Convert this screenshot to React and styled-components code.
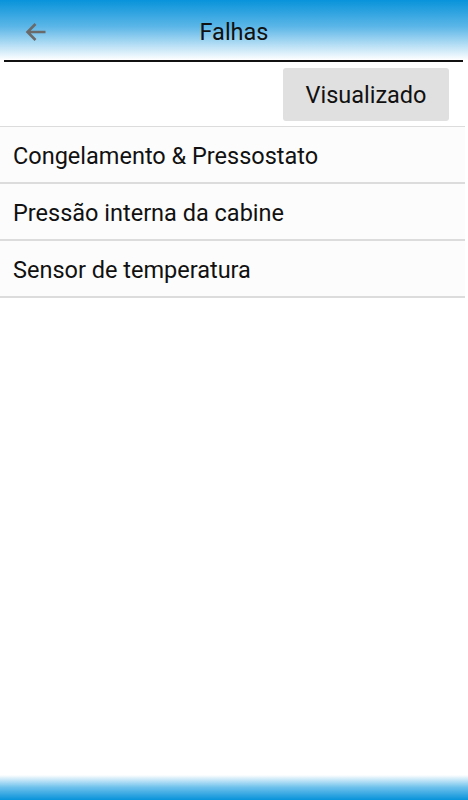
import styled, { createGlobalStyle } from "styled-components"

const GlobalStyle = createGlobalStyle`
    html, body {
        margin: 0;
        padding: 0;
        background: #ffffff;
        font-family: Roboto, "Noto Sans", sans-serif;
    }
`

const falhas = [
    "Congelamento & Pressostato",
    "Pressão interna da cabine",
    "Sensor de temperatura",
]

export default function App() {
    return (
        <Page>
            <GlobalStyle />
            <Header>
                <BackButton aria-label="Voltar">
                    <svg width="24" height="24" viewBox="0 0 24 24">
                        <path d="M21.5 12H4M11.5 4L3.5 12L11.5 20" fill="none" stroke="#6a6a6a" strokeWidth="2.6" />
                    </svg>
                </BackButton>
                <Title>Falhas</Title>
            </Header>
            <Divider />
            <Content>
                <Toolbar>
                    <ViewedButton>Visualizado</ViewedButton>
                </Toolbar>
                <List>
                    {falhas.map(falha =>
                        <Item key={falha}>{falha}</Item>
                    )}
                </List>
            </Content>
            <Footer />
        </Page>
    )
}

const Page = styled.div`
    display: flex;
    flex-direction: column;
    min-height: 100vh;
`

const Header = styled.header`
    position: relative;
    box-sizing: border-box;
    height: 60px;
    padding-top: 4px;
    display: flex;
    align-items: center;
    justify-content: center;
    background: linear-gradient(to bottom, #0893da 0%, #5db7e8 45%, #ffffff 100%);
`

const BackButton = styled.button`
    position: absolute;
    left: 24px;
    top: 20px;
    padding: 0;
    border: none;
    background: transparent;
    display: flex;
`

const Title = styled.h1`
    margin: 0;
    font-size: 23.5px;
    font-weight: 400;
    color: #111;
`

const Divider = styled.div`
    height: 1.5px;
    margin: 0 5px 0 4px;
    background: #111;
`

const Content = styled.main`
    flex: 1;
    width: 465px;
`

const Toolbar = styled.div`
    display: flex;
    justify-content: flex-end;
    padding: 6px 16px 5px 0;
`

const ViewedButton = styled.button`
    width: 166px;
    height: 53px;
    padding: 2px 0 0;
    border: none;
    border-radius: 3px;
    background: #e0e0e0;
    font-family: Roboto, "Noto Sans", sans-serif;
    font-size: 23.5px;
    color: #111;
`

const List = styled.ul`
    margin: 0;
    padding: 0;
    list-style: none;
    border-top: 1.5px solid #dcdcdc;
`

const Item = styled.li`
    box-sizing: border-box;
    height: 57px;
    display: flex;
    align-items: center;
    padding: 3px 0 0 13px;
    background: #fcfcfc;
    border-bottom: 2px solid #dcdcdc;
    font-size: 23.5px;
    color: #111;
`

const Footer = styled.footer`
    height: 25px;
    background: linear-gradient(to bottom, #ffffff 0%, #6cc0ec 50%, #0893da 100%);
`
